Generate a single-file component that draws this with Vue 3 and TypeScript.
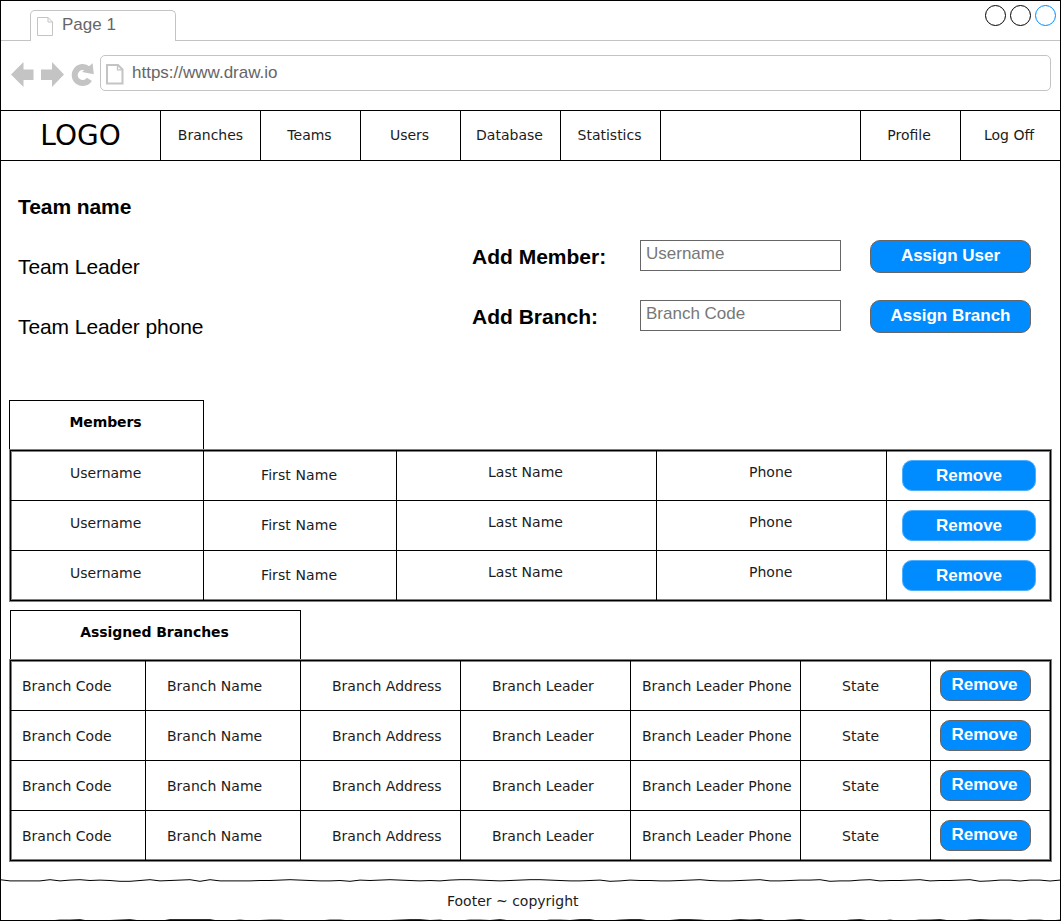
<script setup lang="ts">
interface Column {
  label: string
  cls: string
}

const mainLinks: string[] = ['Branches', 'Teams', 'Users', 'Database', 'Statistics']

const memberColumns: Column[] = [
  { label: 'Username', cls: 'm-user' },
  { label: 'First Name', cls: 'm-first' },
  { label: 'Last Name', cls: 'm-last' },
  { label: 'Phone', cls: 'm-phone' },
]

const branchColumns: Column[] = [
  { label: 'Branch Code', cls: 'b-code' },
  { label: 'Branch Name', cls: 'b-name' },
  { label: 'Branch Address', cls: 'b-address' },
  { label: 'Branch Leader', cls: 'b-leader' },
  { label: 'Branch Leader Phone', cls: 'b-phone' },
  { label: 'State', cls: 'b-state' },
]

// Vertical wobble of the hand-drawn rules, one digit per 10px; 4 is the rule itself.
const topWobble =
  '2555525324346642543262555544323455463432345453223454322345543653445543245543255433265532544325443265'
const bottomWobble =
  '5655653326443255622222653543354653354644322436533425546334226532255422356423265325466325636533256323'

function wobble(digits: string): string {
  const points = digits.split('').map((d, i) => `${i * 10},${(2.5 + (Number(d) - 4) * 0.4).toFixed(1)}`)
  for (let i = digits.length; i <= 106; i++) {
    points.push(`${i * 10},${i % 3 === 0 ? 3 : 2.1}`)
  }
  return points.join(' ')
}
</script>

<template>
  <div class="window">
    <header class="chrome">
      <div class="tab-strip">
        <div class="tab">
          <svg class="tab-icon" width="18" height="21" viewBox="0 0 18 21">
            <path d="M1.5 1.5H12L16.5 6V19.5H1.5Z" fill="#fff" stroke="#c4c4c4" />
            <path d="M12 1.5V6H16.5" fill="none" stroke="#c4c4c4" />
          </svg>
          <span>Page 1</span>
        </div>
        <svg class="controls" width="74" height="24" viewBox="0 0 74 24">
          <circle cx="11.5" cy="11.5" r="10" fill="none" stroke="#000" />
          <circle cx="36.5" cy="11.5" r="10" fill="none" stroke="#000" />
          <circle cx="61.5" cy="11.5" r="10" fill="none" stroke="#008cff" />
        </svg>
      </div>
      <div class="toolbar">
        <svg class="nav-icons" width="90" height="30" viewBox="0 0 90 30">
          <path d="M1 14.5L13.5 2V9.5H23.5V20H13.5V27Z" fill="#c4c4c4" />
          <path d="M54 14.5L42 2V9.5H31V20H42V27Z" fill="#c4c4c4" />
          <path d="M79.4 19.4A8 8 0 1 1 78 9" fill="none" stroke="#c4c4c4" stroke-width="6" />
          <path d="M82.6 3.2L83.8 14.3L72 12Z" fill="#c4c4c4" />
        </svg>
        <div class="address">
          <svg width="20" height="22" viewBox="0 0 20 22">
            <path d="M2 2H13L17.5 6.5V20.5H2Z" fill="#fff" stroke="#c4c4c4" stroke-width="2" />
            <path d="M12.5 2V6.8H17.5" fill="none" stroke="#c4c4c4" stroke-width="1.3" />
          </svg>
          <span>https://www.draw.io</span>
        </div>
      </div>
    </header>

    <nav class="menu">
      <div class="logo"><span>LOGO</span></div>
      <div v-for="link in mainLinks" :key="link" class="link"><span>{{ link }}</span></div>
      <div class="spacer"></div>
      <div class="link account"><span>Profile</span></div>
      <div class="link account last"><span>Log Off</span></div>
    </nav>

    <main>
      <section class="team">
        <div class="info"><b>Team name</b></div>
        <div class="info">Team Leader</div>
        <b class="field-label">Add Member:</b>
        <div class="field">Username</div>
        <div class="button assign">Assign User</div>
        <div class="info">Team Leader phone</div>
        <b class="field-label">Add Branch:</b>
        <div class="field">Branch Code</div>
        <div class="button assign">Assign Branch</div>
      </section>

      <section class="block">
        <h2 class="heading members-heading"><span>Members</span></h2>
        <div class="table">
          <div v-for="row in 3" :key="row" class="row members-row">
            <div v-for="col in memberColumns" :key="col.label" class="cell" :class="col.cls"><span>{{ col.label }}</span></div>
            <div class="cell action"><div class="button remove wide">Remove</div></div>
          </div>
        </div>
      </section>

      <section class="block">
        <h2 class="heading"><span>Assigned Branches</span></h2>
        <div class="table">
          <div v-for="row in 4" :key="row" class="row branches-row">
            <div v-for="col in branchColumns" :key="col.label" class="cell" :class="col.cls"><span>{{ col.label }}</span></div>
            <div class="cell action"><div class="button remove">Remove</div></div>
          </div>
        </div>
      </section>
    </main>

    <footer>
      <svg class="rule" width="1060" height="5" viewBox="0 0 1060 5">
        <polyline :points="wobble(topWobble)" fill="none" stroke="#000" />
      </svg>
      <span>Footer ~ copyright</span>
      <svg class="rule low" width="1060" height="5" viewBox="0 0 1060 5">
        <polyline :points="wobble(bottomWobble)" fill="none" stroke="#000" />
      </svg>
    </footer>
  </div>
</template>

<style>
html,
body {
  margin: 0;
  background: #fff;
}
</style>

<style scoped>
.window {
  box-sizing: border-box;
  width: 1061px;
  height: 921px;
  border: 1px solid #000;
  background: #fff;
  color: #000;
  font: 14px/20px "DejaVu Sans", sans-serif;
}
.window * {
  box-sizing: border-box;
}
svg {
  display: block;
  flex: none;
}
span {
  white-space: nowrap;
}
.chrome {
  height: 109px;
  color: #666;
  font: 17px/20px "Liberation Sans", Arial, sans-serif;
}
.tab-strip {
  display: flex;
  justify-content: space-between;
  height: 40px;
  padding: 9px 2px 0 29px;
  border-bottom: 1px solid #c4c4c4;
}
.tab {
  display: flex;
  width: 146px;
  height: 31px;
  padding: 5px 0 0 5px;
  gap: 8px;
  border: 1px solid #c4c4c4;
  border-bottom: 0;
  border-radius: 5px 5px 0 0;
  background: #fff;
}
.tab span {
  margin-top: -1px;
}
.controls {
  margin: -6px 0 0;
}
.toolbar {
  display: flex;
  padding: 14px 9px 0;
}
.nav-icons {
  margin-top: 5px;
}
.address {
  display: flex;
  flex: 1;
  height: 36px;
  padding: 7px 0 0 4px;
  gap: 7px;
  border: 1px solid #c4c4c4;
  border-radius: 5px;
}
.menu {
  display: flex;
  height: 51px;
  border: solid #000;
  border-width: 1px 0;
}
.menu > div {
  display: flex;
  align-items: center;
  justify-content: center;
  width: 100px;
  border-right: 1px solid #000;
}
.menu > .link {
  padding: 0 2px 2px 0;
  color: #1c1c1c;
}
.menu > .link:nth-child(2) {
  padding-right: 0;
}
.menu > .account {
  padding-right: 3px;
}
.menu > .logo {
  width: 160px;
  font-size: 28px;
}
.menu > .spacer {
  width: 200px;
}
.menu > .last {
  width: 99px;
  border: 0;
}
.team {
  display: grid;
  grid-template-columns: 454px 168px 230px 161px;
  grid-template-rows: repeat(3, 60px);
  height: 239px;
  padding: 16px 0 0 17px;
  font: 21px/60px "Liberation Sans", Arial, sans-serif;
  white-space: nowrap;
}
.team > .info {
  grid-column: 1;
  letter-spacing: -0.08px;
}
.field-label {
  line-height: 40px;
}
.field {
  width: 201px;
  height: 31px;
  margin-top: 3px;
  padding-left: 5px;
  border: 1px solid #666;
  color: #777;
  font-size: 17px;
  line-height: 26px;
}
.button {
  border: 1px solid #666;
  border-radius: 10px;
  background: #008cff;
  color: #fff;
  font: bold 17px/29px "Liberation Sans", Arial, sans-serif;
  text-align: center;
}
.assign {
  width: 161px;
  height: 33px;
  margin-top: 3px;
}
.remove {
  width: 91px;
  height: 31px;
  line-height: 28px;
  padding-right: 2px;
}
.remove.wide {
  width: 134px;
  padding-right: 0;
  border-color: #4dafff;
  line-height: 29px;
}
.block {
  height: 210px;
  padding-left: 9px;
}
.heading {
  display: flex;
  justify-content: center;
  width: 291px;
  height: 50px;
  margin: 0;
  padding: 11px 2px 0 0;
  border: 1px solid #000;
  border-bottom: 0;
  font-size: 14px;
  line-height: 20px;
  letter-spacing: -0.08px;
}
.members-heading {
  width: 195px;
  margin-left: -1px;
}
.table {
  width: 1041px;
  border: 1px solid #000;
  box-shadow: 0 0 0 1px #808080, inset 0 0 0 1px #808080;
}
.row {
  display: grid;
  height: 50px;
  border-bottom: 1px solid #000;
}
.row:last-child {
  height: 49px;
  border-bottom: 0;
}
.members-row {
  grid-template-columns: 193px 193px 260px 230px 1fr;
}
.branches-row {
  grid-template-columns: 135px 155px 160px 170px 170px 130px 1fr;
}
.cell {
  border-right: 1px solid #000;
  padding-top: 15px;
  color: #1c1c1c;
}
.cell:last-child {
  border-right: 0;
}
.m-user {
  padding: 12px 0 0 59px;
}
.m-first {
  padding: 14px 0 0 57px;
  letter-spacing: 0.1px;
}
.m-last {
  padding: 11px 0 0 91px;
}
.m-phone {
  padding: 11px 0 0 92px;
}
.b-code {
  padding-left: 11px;
}
.b-name {
  padding-left: 21px;
}
.b-address {
  padding-left: 31px;
}
.b-leader {
  padding-left: 31px;
}
.b-phone {
  padding-left: 11px;
}
.b-state {
  padding-left: 41px;
}
.cell.action {
  padding: 9px 0 0 9px;
}
.members-row .action {
  padding-left: 15px;
}
.block + .block {
  margin-bottom: 60px;
}
.block + .block {
  margin-bottom: 0;
  height: 270px;
}
footer {
  position: relative;
  height: 40px;
  padding: 11px 0 0 446px;
  color: #1c1c1c;
}
.rule {
  position: absolute;
  left: -1px;
  top: -2px;
}
.rule.low {
  top: 38px;
}
</style>
